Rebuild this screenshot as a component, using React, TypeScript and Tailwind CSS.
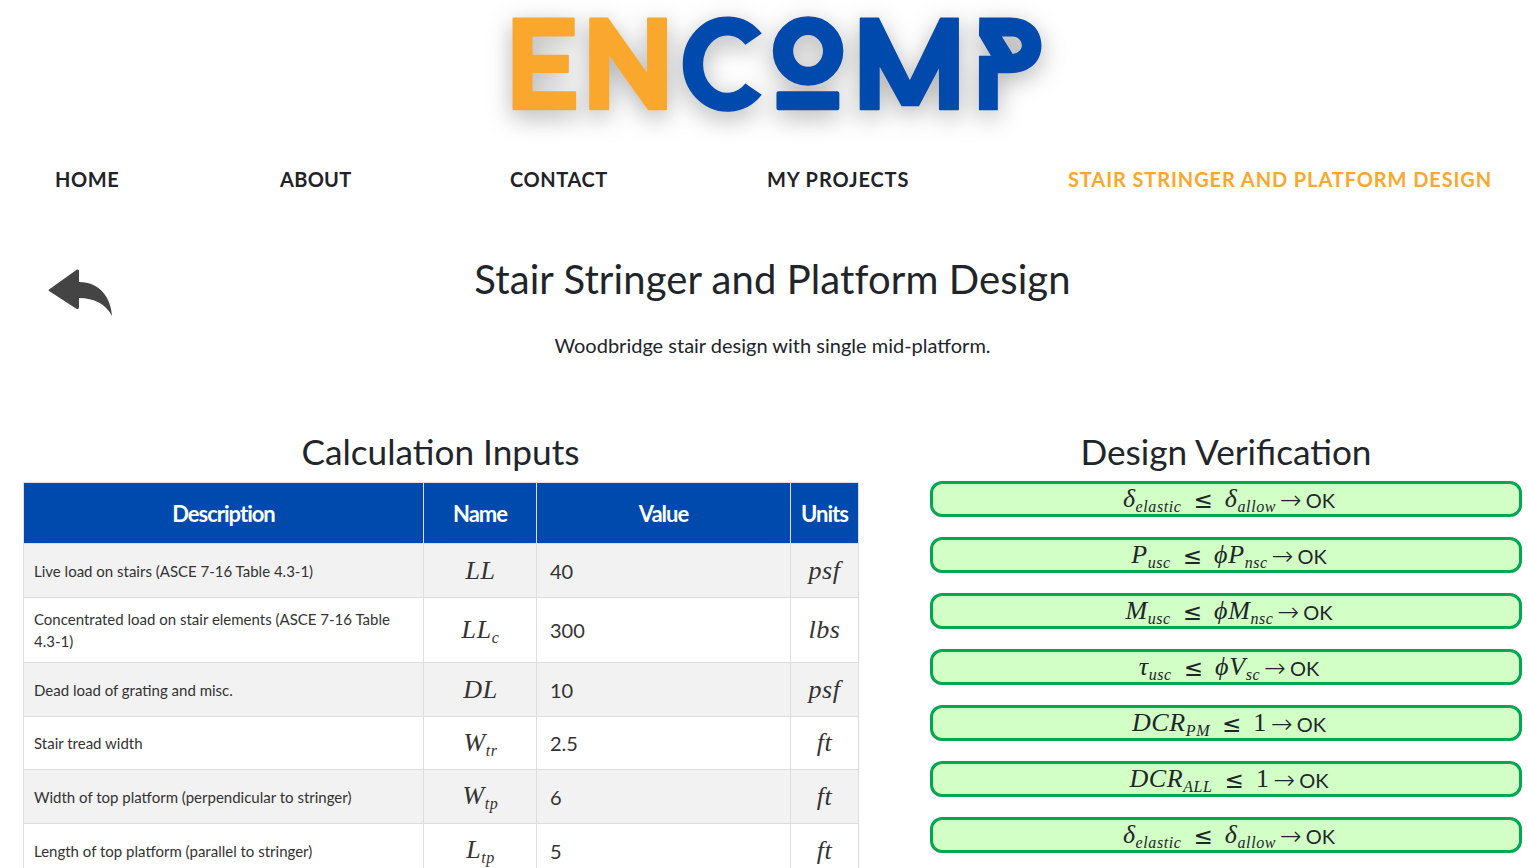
const navItems = [
  { label: "HOME", width: "w-[65px]", spacing: "tracking-[0.6px]" },
  { label: "ABOUT", width: "w-[70px]", spacing: "tracking-[0.3px]" },
  { label: "CONTACT", width: "w-[97px]", spacing: "tracking-[0.6px]" },
  { label: "MY PROJECTS", width: "w-[141px]", spacing: "tracking-[0.9px]" },
];

const rows = [
  { desc: "Live load on stairs (ASCE 7-16 Table 4.3-1)", name: "LL", sub: "", value: "40", units: "psf", h: "h-[54px]" },
  { desc: "Concentrated load on stair elements (ASCE 7-16 Table 4.3-1)", name: "LL", sub: "c", value: "300", units: "lbs", h: "h-[65px]" },
  { desc: "Dead load of grating and misc.", name: "DL", sub: "", value: "10", units: "psf", h: "h-[54px]" },
  { desc: "Stair tread width", name: "W", sub: "tr", value: "2.5", units: "ft", h: "h-[53px]" },
  { desc: "Width of top platform (perpendicular to stringer)", name: "W", sub: "tp", value: "6", units: "ft", h: "h-[54px]" },
  { desc: "Length of top platform (parallel to stringer)", name: "L", sub: "tp", value: "5", units: "ft", h: "h-[54px]" },
];

const checks = [
  { left: "δ", leftSub: "elastic", right: "δ", rightSub: "allow" },
  { left: "P", leftSub: "usc", right: "ϕP", rightSub: "nsc" },
  { left: "M", leftSub: "usc", right: "ϕM", rightSub: "nsc" },
  { left: "τ", leftSub: "usc", right: "ϕV", rightSub: "sc" },
  { left: "DCR", leftSub: "PM", right: "1", rightSub: "" },
  { left: "DCR", leftSub: "ALL", right: "1", rightSub: "" },
  { left: "δ", leftSub: "elastic", right: "δ", rightSub: "allow" },
];

function Logo() {
  return (
    <svg
      viewBox="0 0 1568 400"
      preserveAspectRatio="none"
      className="block ml-[490px] w-[570px] h-[135px] drop-shadow-[0_7px_12px_rgba(0,0,0,0.3)]"
    >
      <g fill="#faa72e" stroke="#faa72e" strokeWidth="6" strokeLinejoin="round">
        <path d="M65 55H230V105H114V165H214V213H114V273H234V324H65Z" />
        <path d="M276 55H323L435 225V55H484V324H437L325 155V324H276Z" />
      </g>
      <g fill="#004aad" stroke="#004aad" strokeLinejoin="round">
        <path d="M725 116A95 113 0 1 0 725 264" fill="none" strokeWidth="56" />
        <ellipse cx="875" cy="151" rx="69" ry="75" fill="none" strokeWidth="56" />
        <rect x="791" y="273" width="167" height="51" rx="3" strokeWidth="6" />
        <path d="M1020 55H1068L1155 245L1240 55H1287V324H1238V190L1178 312H1134L1069 185V324H1020Z" strokeWidth="6" />
        <path
          d="M1346 52H1430C1482 52 1517 85 1517 135C1517 185 1482 217 1430 217H1397V327H1345V165H1378L1345 105ZM1408 108L1438 160C1452 158 1463 148 1463 135C1463 120 1452 108 1438 108Z"
          fillRule="evenodd"
          stroke="none"
        />
      </g>
    </svg>
  );
}

function BackArrow() {
  return (
    <svg viewBox="0 0 64 48" className="w-[64px] h-[48px] shrink-0">
      <path
        d="M1 21.5L29 1.5Q31 1 31 3V14C52 14 63 30 64 48C58 36 46 30 31 30V39Q31 42 28 40.5L1 23Q0 22.3 1 21.5Z"
        fill="#444444"
      />
    </svg>
  );
}

// math text, digits stay upright like the rendered formula
function Sym({ text, sub }: { text: string; sub?: string }) {
  return (
    <span className="font-['Liberation_Serif',serif] whitespace-nowrap tracking-[0.6px]">
      <span className={`text-[26px] leading-none ${text === "1" ? "not-italic" : "italic"}`}>{text}</span>
      {sub ? <sub className="italic text-[16px] leading-none align-[-5px] bottom-auto">{sub}</sub> : null}
    </span>
  );
}

export default function App() {
  return (
    <div className="bg-white text-[#212529] font-['Lato','Open_Sans',sans-serif] h-[868px] overflow-hidden">
      <Logo />

      <nav className="mt-[19px] h-[50px] pl-[55px] flex items-center gap-[160px] font-['Lato',sans-serif] font-bold text-[20px] whitespace-nowrap">
        {navItems.map((item) => (
          <a key={item.label} className={`${item.width} ${item.spacing} text-[#1f2328]`}>
            {item.label}
          </a>
        ))}
        <a className="text-[#faa72e] tracking-[0.9px]">STAIR STRINGER AND PLATFORM DESIGN</a>
      </nav>

      <div className="mt-[45px] pl-[48px] pr-[96px] flex items-start">
        <div className="mt-[19px]">
          <BackArrow />
        </div>
        <div className="flex-1 text-center">
          <h1 className="h-[60px] text-[40px] tracking-[0.1px] leading-[60px] font-normal">Stair Stringer and Platform Design</h1>
          <p className="mt-[21px] h-[30px] text-[20px] leading-[30px]">Woodbridge stair design with single mid-platform.</p>
        </div>
      </div>

      <div className="mt-[69px] pl-[23px] flex gap-[72px]">
        <section className="w-[835px] shrink-0">
          <h2 className="h-[44px] mb-[9px] text-center text-[35.2px] leading-[44px] font-normal">Calculation Inputs</h2>
          <table className="w-[835px] table-fixed border-collapse text-[#333333]">
            <colgroup>
              <col className="w-[400px]" />
              <col className="w-[113px]" />
              <col className="w-[254px]" />
              <col className="w-[68px]" />
            </colgroup>
            <thead>
              <tr className="h-[61px] bg-[#004aad] text-white text-[22px] tracking-[-1px]">
                <th className="border border-[#dddddd] font-bold">Description</th>
                <th className="border border-[#dddddd] font-bold">Name</th>
                <th className="border border-[#dddddd] font-bold">Value</th>
                <th className="border border-[#dddddd] font-bold">Units</th>
              </tr>
            </thead>
            <tbody>
              {rows.map((row, i) => (
                <tr key={i} className={`${row.h} ${i % 2 === 0 ? "bg-[#f2f2f2]" : "bg-white"}`}>
                  <td className="border border-[#dddddd] pl-[10px] pr-[24px] text-[15px] leading-[22px]">{row.desc}</td>
                  <td className="border border-[#dddddd] text-center pt-[2px] pl-[1px]">
                    <Sym text={row.name} sub={row.sub} />
                  </td>
                  <td className="border border-[#dddddd] pl-[13px] text-[20px]">{row.value}</td>
                  <td className="border border-[#dddddd] text-center pt-[2px]">
                    <Sym text={row.units} />
                  </td>
                </tr>
              ))}
            </tbody>
          </table>
        </section>

        <section className="w-[592px] shrink-0">
          <h2 className="h-[44px] mb-[8px] text-center text-[35.2px] leading-[44px] font-normal">Design Verification</h2>
          <div className="flex flex-col gap-[20px]">
            {checks.map((check, i) => (
              <div
                key={i}
                className="h-[36px] pl-[6px] pt-[2px] flex items-center justify-center gap-[4px] rounded-[12px] border-[3px] border-[#00a651] bg-[#d1ffc6] text-[20px]"
              >
                <Sym text={check.left} sub={check.leftSub} />
                <span className="mx-[8px] font-['DejaVu_Sans',sans-serif] text-[23px] leading-none">≤</span>
                <Sym text={check.right} sub={check.rightSub} />
                <span className="font-['DejaVu_Sans',sans-serif] font-light text-[26px] leading-none">→</span>
                <span>OK</span>
              </div>
            ))}
          </div>
        </section>
      </div>
    </div>
  );
}
